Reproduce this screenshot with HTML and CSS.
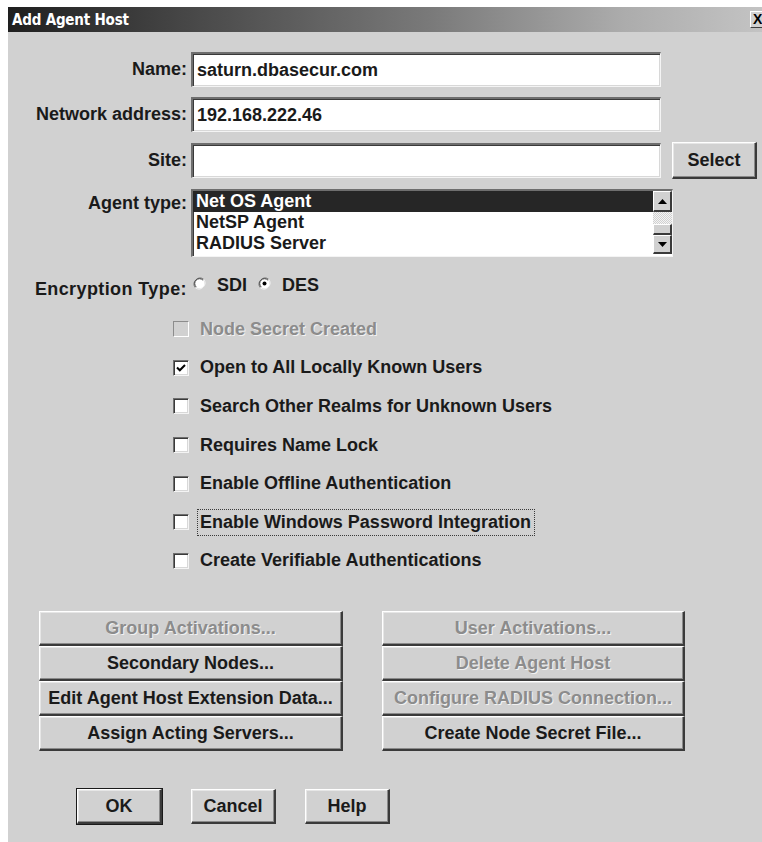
FILE: index.html
```html
<!DOCTYPE html>
<html lang="en">
<head>
<meta charset="utf-8">
<title>Add Agent Host</title>
<link rel="stylesheet" href="styles.css">
</head>
<body>
<div class="dialog">
  <div class="titlebar">
    <span class="title">Add Agent Host</span>
    <span class="close">X</span>
  </div>

  <div class="content">
    <div class="form">
      <label class="lbl">Name:</label>
      <div class="field"><span class="field-text">saturn.dbasecur.com</span></div>
      <span></span>

      <label class="lbl">Network address:</label>
      <div class="field"><span class="field-text">192.168.222.46</span></div>
      <span></span>

      <label class="lbl">Site:</label>
      <div class="field"></div>
      <div class="btn btn-select">Select</div>

      <label class="lbl lbl-top">Agent type:</label>
      <div class="listbox">
        <ul class="list-items">
          <li class="selected">Net OS Agent</li>
          <li>NetSP Agent</li>
          <li>RADIUS Server</li>
        </ul>
        <div class="scrollbar">
          <div class="sb-btn">
            <svg width="9" height="5" viewBox="0 0 9 5"><path d="M0 5 L4.5 0 L9 5 Z" fill="#000"/></svg>
          </div>
          <div class="sb-track"></div>
          <div class="sb-thumb"></div>
          <div class="sb-btn sb-down">
            <svg width="9" height="5" viewBox="0 0 9 5"><path d="M0 0 L9 0 L4.5 5 Z" fill="#000"/></svg>
          </div>
        </div>
      </div>

      <label class="lbl lbl-enc">Encryption Type:</label>
      <div class="radios">
        <span class="radio">
          <svg width="13" height="13" viewBox="0 0 13 13">
            <circle cx="6.5" cy="6.5" r="5" fill="#fff"/>
            <path d="M2.3 10.7 A6 6 0 0 1 10.7 2.3" fill="none" stroke="#7a7a7a" stroke-width="1"/>
            <path d="M10.7 2.3 A6 6 0 0 1 2.3 10.7" fill="none" stroke="#f4f4f4" stroke-width="1"/>
            <path d="M3.1 9.9 A4.8 4.8 0 0 1 9.9 3.1" fill="none" stroke="#3a3a3a" stroke-width="1"/>
          </svg>
        </span>
        <span class="radio-text">SDI</span>
        <span class="radio">
          <svg width="13" height="13" viewBox="0 0 13 13">
            <circle cx="6.5" cy="6.5" r="5" fill="#fff"/>
            <path d="M2.3 10.7 A6 6 0 0 1 10.7 2.3" fill="none" stroke="#7a7a7a" stroke-width="1"/>
            <path d="M10.7 2.3 A6 6 0 0 1 2.3 10.7" fill="none" stroke="#f4f4f4" stroke-width="1"/>
            <path d="M3.1 9.9 A4.8 4.8 0 0 1 9.9 3.1" fill="none" stroke="#3a3a3a" stroke-width="1"/>
            <circle cx="6.5" cy="6.5" r="2" fill="#000"/>
          </svg>
        </span>
        <span class="radio-text">DES</span>
      </div>
      <span></span>
    </div>

    <ul class="checks">
      <li class="check disabled"><span class="box"></span><span class="check-text">Node Secret Created</span></li>
      <li class="check">
        <span class="box">
          <svg width="12" height="12" viewBox="0 0 12 12"><path d="M2 5.5 L4.8 8.3 L10 3" fill="none" stroke="#000" stroke-width="2"/></svg>
        </span>
        <span class="check-text">Open to All Locally Known Users</span>
      </li>
      <li class="check"><span class="box"></span><span class="check-text">Search Other Realms for Unknown Users</span></li>
      <li class="check"><span class="box"></span><span class="check-text">Requires Name Lock</span></li>
      <li class="check"><span class="box"></span><span class="check-text">Enable Offline Authentication</span></li>
      <li class="check"><span class="box"></span><span class="check-text focus">Enable Windows Password Integration</span></li>
      <li class="check"><span class="box"></span><span class="check-text">Create Verifiable Authentications</span></li>
    </ul>

    <div class="actions">
      <div class="btn disabled">Group Activations...</div>
      <div class="btn disabled">User Activations...</div>
      <div class="btn">Secondary Nodes...</div>
      <div class="btn disabled">Delete Agent Host</div>
      <div class="btn">Edit Agent Host Extension Data...</div>
      <div class="btn disabled">Configure RADIUS Connection...</div>
      <div class="btn">Assign Acting Servers...</div>
      <div class="btn">Create Node Secret File...</div>
    </div>

    <div class="footer">
      <div class="btn btn-small btn-default">OK</div>
      <div class="btn btn-small">Cancel</div>
      <div class="btn btn-small">Help</div>
    </div>
  </div>
</div>
</body>
</html>
```

FILE: styles.css
```css
html, body {
  margin: 0;
  padding: 0;
  background: #ffffff;
  height: 842px;
  overflow: hidden;
}

.dialog {
  margin: 7px 0 0 8px;
  width: 770px;
  height: 835px;
  background: #d1d1d1;
  font-family: "Liberation Sans", Arial, sans-serif;
  font-weight: bold;
  font-size: 18px;
  color: #1a1a1a;
}

/* window caption */
.titlebar {
  height: 25px;
  display: flex;
  align-items: center;
  justify-content: space-between;
  background: linear-gradient(to right, #1f1f1f 0%, #4a4a4a 25%, #7a7a7a 55%, #acacac 80%, #c6c6c6 100%);
}

.title {
  padding-left: 4px;
  font-family: "DejaVu Sans Condensed", "DejaVu Sans", sans-serif;
  font-stretch: condensed;
  font-size: 15px;
  font-weight: bold;
  color: #ffffff;
  letter-spacing: -0.2px;
}

.close {
  width: 20px;
  height: 17px;
  margin-right: 8px;
  box-sizing: border-box;
  background: #d1d1d1;
  border-top: 1px solid #ffffff;
  border-left: 1px solid #ffffff;
  border-right: 1px solid #404040;
  border-bottom: 1px solid #404040;
  font-family: "Liberation Sans", Arial, sans-serif;
  font-size: 14px;
  line-height: 15px;
  padding-left: 2px;
  color: #000;
}

.content {
  padding-top: 20px;
}

/* labelled fields */
.form {
  display: grid;
  grid-template-columns: 179px 470px 85px;
  column-gap: 4px;
  row-gap: 10px;
  align-items: center;
}

.lbl {
  text-align: right;
  white-space: nowrap;
}

.lbl-top {
  align-self: start;
  padding-top: 4px;
}

.field {
  height: 35px;
  box-sizing: border-box;
  background: #ffffff;
  border-style: solid;
  border-width: 2px 1px 1px 2px;
  border-color: #6e6e6e #f4f4f4 #f4f4f4 #6e6e6e;
  box-shadow: inset 1px 1px 0 #3a3a3a, inset -1px -1px 0 #d8d8d8;
  display: flex;
  align-items: center;
  padding-left: 4px;
}

.field-text {
  white-space: nowrap;
}

.btn {
  box-sizing: border-box;
  height: 35px;
  display: flex;
  align-items: center;
  justify-content: center;
  white-space: nowrap;
  background: #d1d1d1;
  border-style: solid;
  border-width: 1px 2px 2px 1px;
  border-color: #ffffff #3a3a3a #3a3a3a #ffffff;
  box-shadow: inset -1px -1px 0 #8a8a8a, inset 1px 1px 0 #e6e6e6;
  color: #1a1a1a;
}

.btn.disabled {
  color: #8c8c8c;
  text-shadow: 1px 1px 0 #f2f2f2;
}

.btn-select {
  margin-left: 7px;
  width: 85px;
  height: 37px;
}

/* agent type list */
.listbox {
  grid-column: 2 / 4;
  width: 482px;
  height: 68px;
  box-sizing: border-box;
  display: flex;
  background: #ffffff;
  border-style: solid;
  border-width: 2px 1px 1px 2px;
  border-color: #6e6e6e #f4f4f4 #f4f4f4 #6e6e6e;
  box-shadow: inset 1px 1px 0 #3a3a3a;
}

.list-items {
  flex: 1;
  list-style: none;
  margin: 0;
  padding: 0;
}

.list-items li {
  height: 21px;
  line-height: 21px;
  padding-left: 3px;
}

.list-items li.selected {
  background: #262626;
  color: #ffffff;
}

.scrollbar {
  width: 19px;
  display: flex;
  flex-direction: column;
}

.sb-btn {
  height: 21px;
  box-sizing: border-box;
  background: #d1d1d1;
  border-style: solid;
  border-width: 1px 2px 2px 1px;
  border-color: #ffffff #3a3a3a #3a3a3a #ffffff;
  display: flex;
  align-items: center;
  justify-content: center;
}

.sb-down {
  height: 19px;
}

.sb-track {
  height: 12px;
  background-color: #e8e8e8;
  background-image: repeating-conic-gradient(#d0d0d0 0 25%, #f4f4f4 0 50%);
  background-size: 2px 2px;
}

.sb-thumb {
  height: 11px;
  box-sizing: border-box;
  background: #d1d1d1;
  border-style: solid;
  border-width: 1px 2px 2px 1px;
  border-color: #ffffff #3a3a3a #3a3a3a #ffffff;
}

/* encryption radios */
.lbl-enc {
  margin-top: 8px;
  padding-top: 4px;
  letter-spacing: 0.4px;
}

.radios {
  margin-top: 8px;
  display: flex;
  align-items: center;
  align-self: start;
  padding-left: 2px;
}

.radio {
  display: flex;
  margin-top: -4px;
}

.radio-text {
  margin-left: 11px;
  margin-right: 11px;
}

/* option checkboxes */
.checks {
  list-style: none;
  margin: 10px 0 0 0;
  padding: 0 0 0 165px;
}

.check {
  height: 38.6px;
  display: flex;
  align-items: center;
}

.box {
  width: 16px;
  height: 16px;
  box-sizing: border-box;
  flex: none;
  background: #ffffff;
  border-style: solid;
  border-width: 1px;
  border-color: #6e6e6e #f4f4f4 #f4f4f4 #6e6e6e;
  box-shadow: inset 1px 1px 0 #3a3a3a, inset -1px -1px 0 #d8d8d8;
  display: flex;
  align-items: center;
  justify-content: center;
  margin-right: 8px;
}

.check.disabled .box {
  background: #d1d1d1;
  border-color: #8c8c8c #ffffff #ffffff #8c8c8c;
  box-shadow: none;
}

.check.disabled .check-text {
  color: #8c8c8c;
  text-shadow: 1px 1px 0 #f2f2f2;
}

.check-text {
  padding: 2px 3px 2px 2px;
  border: 1px solid transparent;
  white-space: nowrap;
}

.check-text.focus {
  border: 1px dotted #3a3a3a;
}

/* command buttons */
.actions {
  margin-top: 31px;
  padding-left: 31px;
  display: grid;
  grid-template-columns: 304px 303px;
  grid-auto-rows: 35px;
  column-gap: 39px;
}

.footer {
  margin-top: 38px;
  padding-left: 69px;
  display: flex;
  gap: 29px;
}

.btn-small {
  width: 85px;
}

.btn-default {
  outline: 1px solid #1a1a1a;
}
```
